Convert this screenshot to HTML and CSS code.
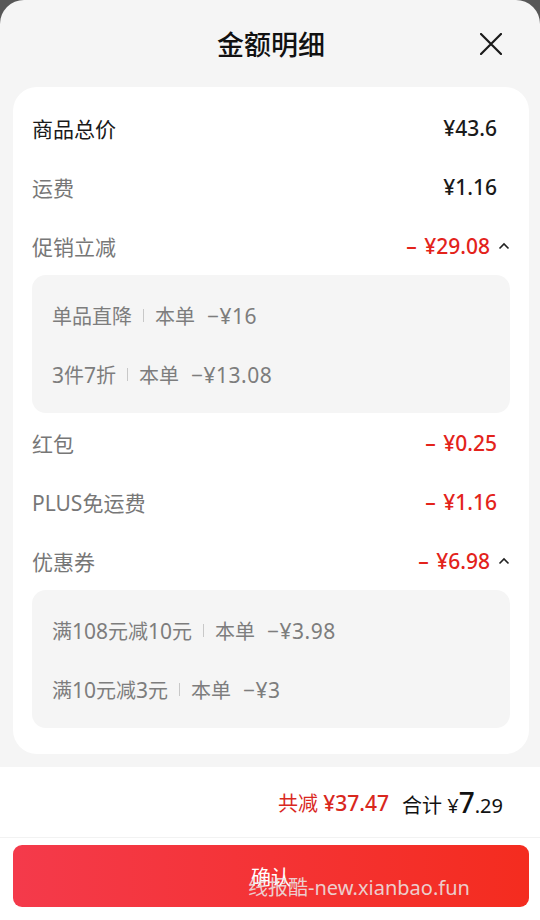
FILE: index.html
```html
<!DOCTYPE html>
<html lang="zh-CN">
<head>
    <meta charset="UTF-8">
    <title>金额明细</title>
    <link rel="stylesheet" href="styles.css">
</head>
<body>
<div class="sheet">
    <div class="header">
        <span></span>
        <h1 class="title">金额明细</h1>
        <span class="close">
            <svg width="22" height="22" viewBox="0 0 22 22"><path d="M1 1L21 21M21 1L1 21" stroke="#1a1a1a" stroke-width="2.2" stroke-linecap="round"/></svg>
        </span>
    </div>

    <div class="card">
        <div class="row">
            <span class="label dark">商品总价</span>
            <span class="value">¥43.6</span>
            <span class="arrow"></span>
        </div>
        <div class="row">
            <span class="label">运费</span>
            <span class="value">¥1.16</span>
            <span class="arrow"></span>
        </div>
        <div class="row">
            <span class="label">促销立减</span>
            <span class="value red">– ¥29.08</span>
            <span class="arrow up"><svg width="12" height="8" viewBox="0 0 12 8"><path d="M1.5 6.5L6 2L10.5 6.5" fill="none" stroke="#222" stroke-width="1.6"/></svg></span>
        </div>
        <div class="detail">
            <div class="item">单品直降<i class="sep"></i>本单<span class="amt">−¥16</span></div>
            <div class="item"><span class="num">3</span>件<span class="num">7</span>折<i class="sep"></i>本单<span class="amt">−¥13.08</span></div>
        </div>
        <div class="row">
            <span class="label">红包</span>
            <span class="value red">– ¥0.25</span>
            <span class="arrow"></span>
        </div>
        <div class="row">
            <span class="label">PLUS免运费</span>
            <span class="value red">– ¥1.16</span>
            <span class="arrow"></span>
        </div>
        <div class="row">
            <span class="label">优惠券</span>
            <span class="value red">– ¥6.98</span>
            <span class="arrow up"><svg width="12" height="8" viewBox="0 0 12 8"><path d="M1.5 6.5L6 2L10.5 6.5" fill="none" stroke="#222" stroke-width="1.6"/></svg></span>
        </div>
        <div class="detail">
            <div class="item">满<span class="num">108</span>元减<span class="num">10</span>元<i class="sep"></i>本单<span class="amt">−¥3.98</span></div>
            <div class="item">满<span class="num">10</span>元减<span class="num">3</span>元<i class="sep"></i>本单<span class="amt">−¥3</span></div>
        </div>
    </div>

    <div class="footer">
        <div class="summary">
            <span class="saved">共减 <b>¥37.47</b></span>
            <span class="total">合计 ¥<b>7</b>.29</span>
        </div>
        <div class="btn-wrap">
            <div class="btn">
                确认
                <span class="mark">线报酷-new.xianbao.fun</span>
            </div>
        </div>
    </div>
</div>
</body>
</html>
```

FILE: styles.css
```css
* {
    padding: 0;
    margin: 0;
    box-sizing: border-box;
}

body {
    background: #575757;
    font-family: "Noto Sans", "Noto Sans CJK SC", sans-serif;
}

.sheet {
    width: 540px;
    height: 920px;
    background: #f5f5f5;
    border-radius: 24px 24px 0 0;
    display: flex;
    flex-direction: column;
    overflow: hidden;
}

.header {
    height: 87px;
    display: grid;
    grid-template-columns: 1fr auto 1fr;
    align-items: center;
}

.title {
    font-size: 27px;
    font-weight: 500;
    color: #111;
    padding-left: 2px;
}

.close {
    justify-self: end;
    padding-right: 38px;
    display: flex;
}

.card {
    margin: 0 11px 0 13px;
    padding: 11px 19px 26px;
    background: #fff;
    border-radius: 24px;
}

.row {
    height: 59px;
    display: flex;
    align-items: center;
}

.label {
    flex: 1;
    font-size: 21px;
    color: #777;
}

.label.dark {
    color: #1a1a1a;
}

.value {
    font-size: 21px;
    font-weight: 500;
    color: #1a1a1a;
}

.value.red {
    color: #e3231b;
    word-spacing: 2px;
}

.arrow {
    width: 13px;
    display: flex;
    justify-content: flex-end;
}

.arrow.up {
    margin-left: 7px;
}

.detail {
    background: #f5f5f5;
    border-radius: 14px;
    padding: 11px 20px 9px;
}

.item {
    height: 59px;
    display: flex;
    align-items: center;
    font-size: 20px;
    color: #7d7d7d;
}

.num {
    font-size: 21px;
}

.amt {
    margin-left: 12px;
    font-size: 21px;
    letter-spacing: 0.5px;
}

.sep {
    width: 1px;
    height: 13px;
    background: #c8c8c8;
    margin: 0 11px;
}

.footer {
    flex: 1;
    margin-top: 13px;
    background: #fff;
}

.summary {
    height: 71px;
    border-bottom: 1px solid #f2f2f2;
    display: flex;
    justify-content: flex-end;
    align-items: center;
    gap: 13px;
    padding-right: 37px;
}

.saved {
    font-size: 20px;
    color: #d9281e;
}

.saved b {
    font-size: 21px;
    font-weight: 500;
}

.total {
    font-size: 20px;
    color: #111;
}

.total b {
    font-size: 28px;
    font-weight: 500;
}

.btn-wrap {
    padding: 7px 11px 0 13px;
}

.btn {
    height: 62px;
    border-radius: 9px;
    background: linear-gradient(90deg, #f43a4b, #f42c1f);
    color: #fff;
    font-size: 20px;
    display: flex;
    justify-content: center;
    align-items: center;
    position: relative;
}

.mark {
    position: absolute;
    left: 235px;
    top: 27px;
    font-size: 20px;
    color: rgba(235, 235, 235, 0.85);
}
```
